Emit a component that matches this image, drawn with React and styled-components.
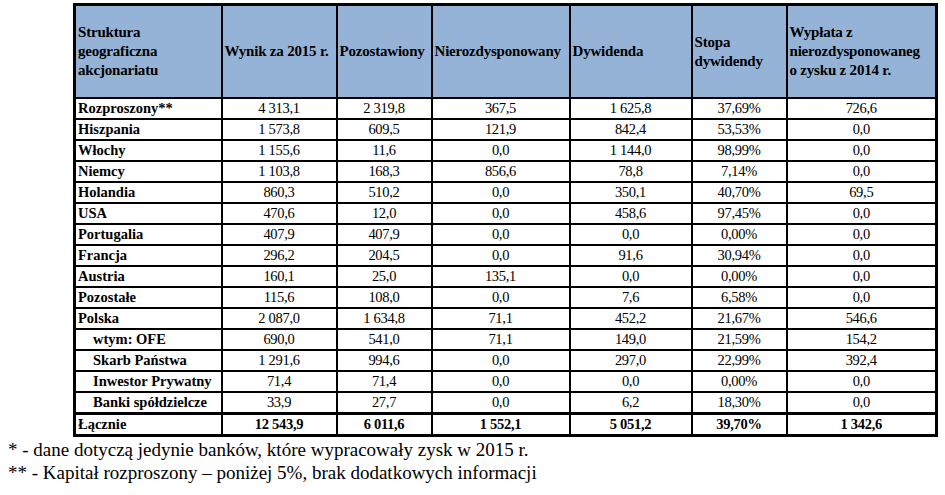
import React from 'react';
import styled, { createGlobalStyle } from 'styled-components';

const serif = `"Liberation Serif", "Times New Roman", serif`;

const GlobalStyle = createGlobalStyle`
  html, body {
    margin: 0;
    padding: 0;
    background: #ffffff;
  }
  body {
    font-family: ${serif};
    color: #000;
  }
`;

const columns = [
  { label: 'Struktura\ngeograficzna\nakcjonariatu', width: 147 },
  { label: 'Wynik za 2015 r.', width: 115 },
  { label: 'Pozostawiony', width: 95 },
  { label: 'Nierozdysponowany', width: 138 },
  { label: 'Dywidenda', width: 122 },
  { label: 'Stopa\ndywidendy', width: 95 },
  { label: 'Wypłata z\nnierozdysponowaneg\no zysku z 2014 r.', width: 150 },
];

const rows = [
  ['Rozproszony**', '4 313,1', '2 319,8', '367,5', '1 625,8', '37,69%', '726,6'],
  ['Hiszpania', '1 573,8', '609,5', '121,9', '842,4', '53,53%', '0,0'],
  ['Włochy', '1 155,6', '11,6', '0,0', '1 144,0', '98,99%', '0,0'],
  ['Niemcy', '1 103,8', '168,3', '856,6', '78,8', '7,14%', '0,0'],
  ['Holandia', '860,3', '510,2', '0,0', '350,1', '40,70%', '69,5'],
  ['USA', '470,6', '12,0', '0,0', '458,6', '97,45%', '0,0'],
  ['Portugalia', '407,9', '407,9', '0,0', '0,0', '0,00%', '0,0'],
  ['Francja', '296,2', '204,5', '0,0', '91,6', '30,94%', '0,0'],
  ['Austria', '160,1', '25,0', '135,1', '0,0', '0,00%', '0,0'],
  ['Pozostałe', '115,6', '108,0', '0,0', '7,6', '6,58%', '0,0'],
  ['Polska', '2 087,0', '1 634,8', '71,1', '452,2', '21,67%', '546,6'],
  ['wtym: OFE', '690,0', '541,0', '71,1', '149,0', '21,59%', '154,2', true],
  ['Skarb Państwa', '1 291,6', '994,6', '0,0', '297,0', '22,99%', '392,4', true],
  ['Inwestor Prywatny', '71,4', '71,4', '0,0', '0,0', '0,00%', '0,0', true],
  ['Banki spółdzielcze', '33,9', '27,7', '0,0', '6,2', '18,30%', '0,0', true],
];

const total = ['Łącznie', '12 543,9', '6 011,6', '1 552,1', '5 051,2', '39,70%', '1 342,6'];

const App = () => {
  return (
    <>
      <GlobalStyle />
      <Page>
        <TableWrap>
          <Table>
            <colgroup>
              {columns.map((col, i) => (
                <col key={i} style={{ width: col.width }} />
              ))}
            </colgroup>
            <thead>
              <tr>
                {columns.map((col, i) => (
                  <HeadCell key={i}>{col.label}</HeadCell>
                ))}
              </tr>
            </thead>
            <tbody>
              {rows.map((row, r) => (
                <tr key={r}>
                  <LabelCell $sub={row[7]}>{row[0]}</LabelCell>
                  {row.slice(1, 7).map((val, c) => (
                    <NumCell key={c}>{val}</NumCell>
                  ))}
                </tr>
              ))}
              <TotalRow>
                <LabelCell>{total[0]}</LabelCell>
                {total.slice(1).map((val, c) => (
                  <NumCell key={c} $bold>
                    {val}
                  </NumCell>
                ))}
              </TotalRow>
            </tbody>
          </Table>
        </TableWrap>
        <Notes>
          <p>* - dane dotyczą jedynie banków, które wypracowały zysk w 2015 r.</p>
          <p>** - Kapitał rozproszony – poniżej 5%, brak dodatkowych informacji</p>
        </Notes>
      </Page>
    </>
  );
};

const Page = styled.div`
  width: 945px;
  height: 495px;
  overflow: hidden;
  display: flex;
  flex-direction: column;
  font-family: ${serif};
`;

const TableWrap = styled.div`
  padding: 3px 0 0 73px;
`;

const Table = styled.table`
  border-collapse: collapse;
  table-layout: fixed;
  width: 862px;
  border: 3px solid #000;
  font-family: ${serif};
`;

const HeadCell = styled.th`
  background: #95b3d7;
  border: 2px solid #000;
  height: 91px;
  padding: 0 2px;
  text-align: left;
  vertical-align: middle;
  white-space: pre-line;
  font-family: ${serif};
  font-size: 15px;
  font-weight: bold;
  line-height: 19px;
  letter-spacing: -0.2px;
  overflow: hidden;
`;

const LabelCell = styled.td`
  border: 2px solid #000;
  height: 19px;
  padding: 0 0 0 ${p => (p.$sub ? '17px' : '2px')};
  font-family: ${serif};
  font-size: 14.5px;
  font-weight: bold;
  line-height: 17px;
  white-space: nowrap;
  overflow: hidden;
`;

const NumCell = styled.td`
  border: 2px solid #000;
  height: 19px;
  padding: 0;
  text-align: center;
  font-family: ${serif};
  font-size: 14.5px;
  font-weight: ${p => (p.$bold ? 'bold' : 'normal')};
  line-height: 17px;
  letter-spacing: -0.3px;
  white-space: nowrap;
`;

const TotalRow = styled.tr`
  border-top: 3px solid #000;
`;

const Notes = styled.div`
  padding: 1px 0 0 8px;
  font-family: ${serif};
  font-size: 19px;
  line-height: 23px;

  p {
    margin: 0;
  }
`;

export default App;
